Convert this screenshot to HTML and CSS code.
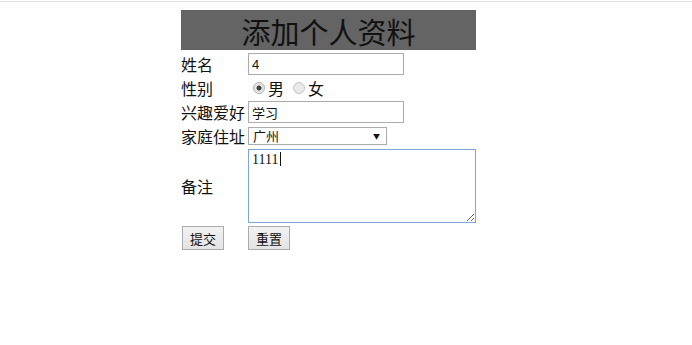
FILE: index.html
```html
<!DOCTYPE html>
<html lang="zh-CN">
<head>
<meta charset="utf-8">
<title>添加个人资料</title>
<link rel="stylesheet" href="styles.css">
</head>
<body>
<div class="topline"></div>
<form class="profile">
  <div class="title">添加个人资料</div>
  <div class="row r1">
    <label class="lbl">姓名</label>
    <input class="text" type="text" value="4">
  </div>
  <div class="row r2">
    <span class="lbl">性别</span>
    <span class="radios">
      <input class="radio" type="radio" name="sex" checked><span class="opt">男</span>
      <input class="radio" type="radio" name="sex"><span class="opt">女</span>
    </span>
  </div>
  <div class="row r3">
    <label class="lbl">兴趣爱好</label>
    <input class="text" type="text" value="学习">
  </div>
  <div class="row r4">
    <label class="lbl">家庭住址</label>
    <span class="selwrap">
      <select class="sel"><option>广州</option></select>
      <span class="arrow">▼</span>
    </span>
  </div>
  <div class="row r5">
    <label class="lbl">备注</label>
    <span class="areawrap">
      <textarea class="area">1111</textarea>
      <span class="caret"></span>
    </span>
  </div>
  <div class="row r6">
    <span class="lbl"><button type="button" class="btn">提交</button></span>
    <button type="reset" class="btn">重置</button>
  </div>
</form>
</body>
</html>
```
FILE: styles.css
```css
html, body {
  margin: 0;
  padding: 0;
  background: #ffffff;
}
body {
  font-family: "Noto Sans CJK SC", "Noto Sans", sans-serif;
  color: #111;
}
.topline {
  margin-top: 1px;
  height: 1px;
  background: #e2e2e2;
}
.profile {
  margin: 8px 0 0 181px;
  width: 295px;
}
.title {
  height: 40px;
  background: #646464;
  color: #111;
  font-size: 29px;
  line-height: 42px;
  text-align: center;
}
.row {
  display: flex;
  align-items: center;
}
.r1 { margin-top: 3px; height: 22px; }
.r2 { margin-top: 2px; height: 22px; }
.r3 { margin-top: 2px; height: 22px; }
.r4 { margin-top: 4px; height: 18px; }
.r5 { margin-top: 4px; height: 74px; }
.r6 { margin-top: 3px; height: 24px; }
.lbl {
  width: 67px;
  flex: none;
  font-size: 16px;
  line-height: 20px;
  color: #111;
  white-space: nowrap;
}
.text {
  box-sizing: border-box;
  width: 156px;
  height: 22px;
  margin: 0;
  padding: 0 3px;
  border: 1px solid #acacac;
  font-family: "Liberation Sans", "Noto Sans CJK SC", sans-serif;
  font-size: 13px;
  color: #111;
  background: #fff;
  outline: none;
}
.radios {
  display: flex;
  align-items: center;
}
.radio {
  appearance: none;
  -webkit-appearance: none;
  box-sizing: border-box;
  width: 12px;
  height: 12px;
  margin: 0 3px 0 5px;
  border: 1px solid #c6c6c6;
  border-radius: 50%;
  background: #e9e9e9;
}
.radio + .opt + .radio {
  margin-left: 9px;
}
.radio:checked {
  background: radial-gradient(circle, #444 0 2.2px, #e4e4e4 2.8px);
  border-color: #b4b4b4;
}
.opt {
  font-size: 16px;
  line-height: 20px;
  color: #111;
}
.selwrap {
  position: relative;
  display: block;
  width: 139px;
  height: 18px;
}
.sel {
  display: block;
  appearance: none;
  -webkit-appearance: none;
  box-sizing: border-box;
  width: 139px;
  height: 18px;
  margin: 0;
  padding: 0 4px;
  border: 1px solid #acacac;
  border-radius: 0;
  background: #fff;
  font-family: "Noto Sans CJK SC", sans-serif;
  font-size: 13px;
  line-height: 16px;
  color: #111;
  outline: none;
}
.arrow {
  position: absolute;
  right: 7px;
  top: 4px;
  font-size: 7px;
  line-height: 10px;
  color: #111;
  pointer-events: none;
}
.areawrap {
  position: relative;
  display: block;
  width: 228px;
  height: 74px;
}
.area {
  display: block;
  box-sizing: border-box;
  width: 228px;
  height: 74px;
  margin: 0;
  padding: 2px 3px;
  border: 1px solid #7ea6d6;
  border-radius: 0;
  font-family: "Liberation Serif", "Noto Sans CJK SC", serif;
  font-size: 14px;
  line-height: 16px;
  color: #111;
  background: #fff;
  outline: none;
  resize: both;
}
.caret {
  position: absolute;
  left: 32px;
  top: 3px;
  width: 1px;
  height: 14px;
  background: #111;
}
.btn {
  box-sizing: border-box;
  height: 24px;
  width: 42px;
  margin: 0;
  padding: 0;
  border: 1px solid #acacac;
  border-radius: 0;
  background: linear-gradient(#f2f2f2, #e3e3e3);
  font-family: "Noto Sans CJK SC", sans-serif;
  font-size: 13px;
  color: #111;
}
.lbl .btn {
  margin-left: 1px;
}
```
